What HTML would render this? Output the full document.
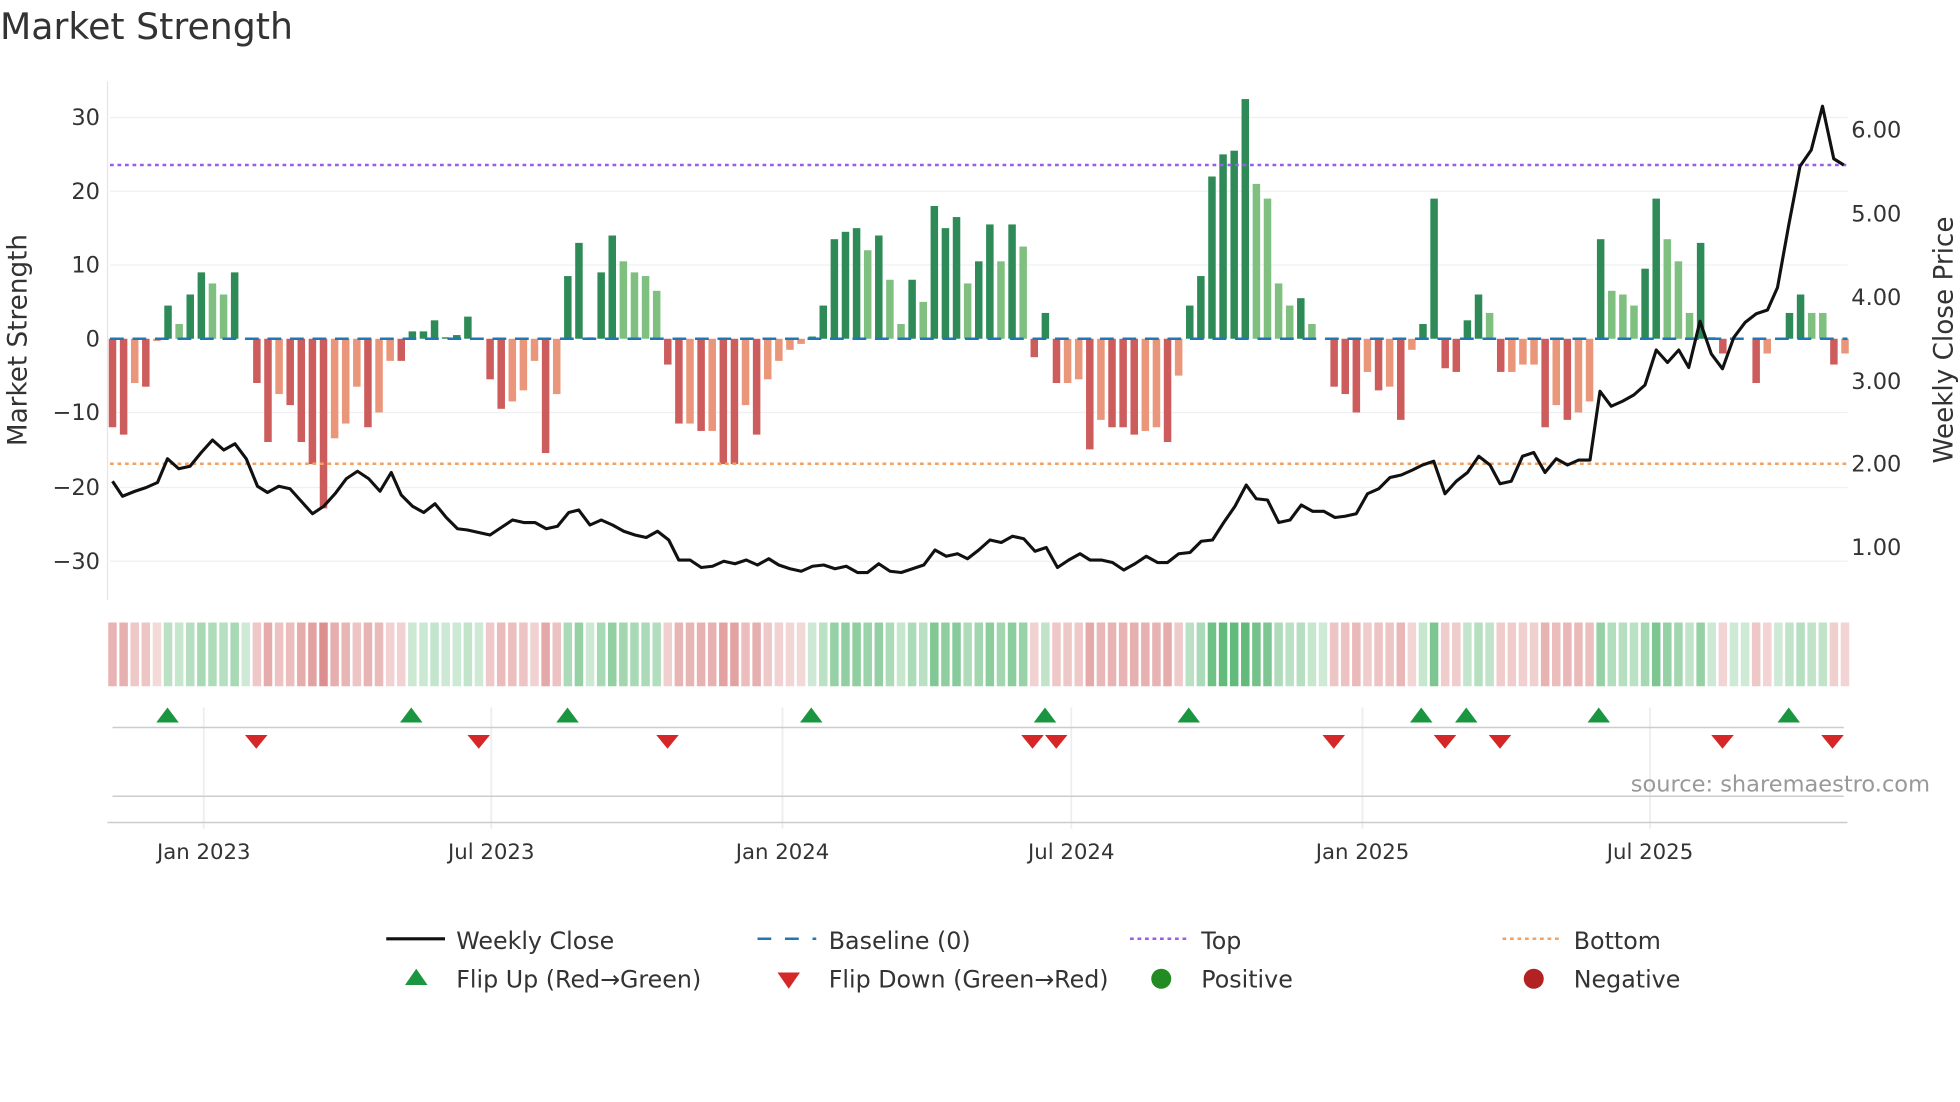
<!DOCTYPE html>
<html><head><meta charset="utf-8"><style>
html,body{margin:0;padding:0;background:#fff;width:1960px;height:1102px;overflow:hidden}
svg{display:block}
text{font-family:"DejaVu Sans","Liberation Sans",sans-serif;fill:#333}
</style></head><body>
<svg id="s" width="1960" height="1102" viewBox="0 0 1568 881.6" xmlns="http://www.w3.org/2000/svg">
<text x="0" y="31" font-size="29">Market Strength</text>
<g id="grid"></g>
<line x1="86" y1="65" x2="86" y2="480" stroke="#e6e6e6" stroke-width="1"/>
<g id="bars"></g>
<line x1="88" y1="271" x2="1478" y2="271" stroke="#1f77b4" stroke-width="2" stroke-dasharray="11,7"/>
<line x1="88" y1="132" x2="1478" y2="132" stroke="#9b5de5" stroke-width="2" stroke-dasharray="3,3"/>
<line x1="88" y1="371" x2="1478" y2="371" stroke="#f4a261" stroke-width="2" stroke-dasharray="3,3"/>
<polyline id="price" fill="none" stroke="#111" stroke-width="2.5" stroke-linejoin="round"/>
<g id="heat"></g>
<g id="lower"></g>
<g font-size="18" text-anchor="end">
<text x="80" y="100">30</text><text x="80" y="159">20</text><text x="80" y="218">10</text><text x="80" y="277">0</text>
<text x="80" y="336">−10</text><text x="80" y="396">−20</text><text x="80" y="455">−30</text>
</g>
<g font-size="18">
<text x="1481" y="110">6.00</text><text x="1481" y="177">5.00</text><text x="1481" y="244">4.00</text>
<text x="1481" y="311">3.00</text><text x="1481" y="377">2.00</text><text x="1481" y="444">1.00</text>
</g>
<text font-size="21" transform="translate(21,272) rotate(-90)" text-anchor="middle">Market Strength</text>
<text font-size="21" transform="translate(1562,272) rotate(-90)" text-anchor="middle">Weekly Close Price</text>
<text x="1544" y="633" font-size="18" text-anchor="end" style="fill:#999">source: sharemaestro.com</text>
<g font-size="17" text-anchor="middle">
<text x="163" y="687">Jan 2023</text><text x="393" y="687">Jul 2023</text><text x="626" y="687">Jan 2024</text>
<text x="857" y="687">Jul 2024</text><text x="1090" y="687">Jan 2025</text><text x="1320" y="687">Jul 2025</text>
</g>
<g font-size="19">
<line x1="309" y1="751" x2="356" y2="751" stroke="#111" stroke-width="2.5"/><text x="365" y="759">Weekly Close</text>
<line x1="606" y1="751" x2="653" y2="751" stroke="#1f77b4" stroke-width="2" stroke-dasharray="11,11"/><text x="663" y="759">Baseline (0)</text>
<line x1="904" y1="751" x2="951" y2="751" stroke="#9b5de5" stroke-width="2" stroke-dasharray="3,3"/><text x="961" y="759">Top</text>
<line x1="1202" y1="751" x2="1249" y2="751" stroke="#f4a261" stroke-width="2" stroke-dasharray="3,3"/><text x="1259" y="759">Bottom</text>
<polygon points="333,775 324,788 342,788" fill="#1a9641"/><text x="365" y="790">Flip Up (Red→Green)</text>
<polygon points="622,778 640,778 631,791" fill="#d62728"/><text x="663" y="790">Flip Down (Green→Red)</text>
<circle cx="929" cy="783" r="8" fill="#228b22"/><text x="961" y="790">Positive</text>
<circle cx="1227" cy="783" r="8" fill="#b22222"/><text x="1259" y="790">Negative</text>
</g>
</svg>
<script>
var NS="http://www.w3.org/2000/svg";
function el(p,t,a){var e=document.createElementNS(NS,t);for(var k in a)e.setAttribute(k,a[k]);document.getElementById(p).appendChild(e);return e;}
[94,153,212,330,390,449].forEach(function(y){el("grid","line",{x1:88,x2:1478,y1:y,y2:y,stroke:"#eef0f3","stroke-width":1});});
var d=[[-12,1],[-13,1],[-6,0],[-6.5,1],[-0.3,0],[4.5,1],[2,0],[6,1],[9,1],[7.5,0],[6,0],[9,1],[0,1],[-6,1],[-14,1],[-7.5,0],[-9,1],[-14,1],[-17,1],[-23,1],[-13.5,0],[-11.5,0],[-6.5,0],[-12,1],[-10,0],[-3,0],[-3,1],[1,1],[1,1],[2.5,1],[0.2,1],[0.5,1],[3,1],[0,1],[-5.5,1],[-9.5,1],[-8.5,0],[-7,0],[-3,0],[-15.5,1],[-7.5,0],[8.5,1],[13,1],[0.2,0],[9,1],[14,1],[10.5,0],[9,0],[8.5,0],[6.5,0],[-3.5,1],[-11.5,1],[-11.5,0],[-12.5,1],[-12.5,0],[-17,1],[-17,1],[-9,0],[-13,1],[-5.5,0],[-3,0],[-1.5,0],[-0.7,0],[0.3,1],[4.5,1],[13.5,1],[14.5,1],[15,1],[12,0],[14,1],[8,0],[2,0],[8,1],[5,0],[18,1],[15,1],[16.5,1],[7.5,0],[10.5,1],[15.5,1],[10.5,0],[15.5,1],[12.5,0],[-2.5,1],[3.5,1],[-6,1],[-6,0],[-5.5,0],[-15,1],[-11,0],[-12,1],[-12,1],[-13,1],[-12.5,0],[-12,0],[-14,1],[-5,0],[4.5,1],[8.5,1],[22,1],[25,1],[25.5,1],[32.5,1],[21,0],[19,0],[7.5,0],[4.5,0],[5.5,1],[2,0],[0,0],[-6.5,1],[-7.5,1],[-10,1],[-4.5,0],[-7,1],[-6.5,0],[-11,1],[-1.5,0],[2,1],[19,1],[-4,1],[-4.5,1],[2.5,1],[6,1],[3.5,0],[-4.5,1],[-4.5,0],[-3.5,0],[-3.5,0],[-12,1],[-9,0],[-11,1],[-10,0],[-8.5,0],[13.5,1],[6.5,0],[6,0],[4.5,0],[9.5,1],[19,1],[13.5,0],[10.5,0],[3.5,0],[13,1],[0.2,1],[-2,1],[0,1],[0,1],[-6,1],[-2,0],[0,1],[3.5,1],[6,1],[3.5,0],[3.5,0],[-3.5,1],[-2,0]];
var sp=(1476-90)/(d.length-1);
d.forEach(function(v,i){var x=90+i*sp,val=v[0],dk=v[1];var h=Math.abs(val)*5.9;
 var c=val>=0?(dk?"#2e8b57":"#7fbf7f"):(dk?"#cd5c5c":"#e9967a");
 if(h>0.3)el("bars","rect",{x:x-3,width:6,y:val>=0?271-h:271,height:h,fill:c});
 var a=Math.min(1,Math.abs(val)/25);
 var hc=val>=0?"rgba(60,170,90,"+(0.25+a*0.55)+")":"rgba(205,90,90,"+(0.22+a*0.5)+")";
 el("heat","rect",{x:x-3.4,width:6.8,y:498,height:51,fill:hc});
});
var p="90,385 98,397 108,393 117,390 126,386 134,367 143,375 152,373 161,362 170,352 179,360 188,355 197,367 206,389 214,394 223,389 232,391 241,401 250,411 259,405 268,395 277,383 286,377 295,383 304,393 313,378 321,396 330,405 339,410 348,403 357,414 366,423 374,424 383,426 392,428 401,422 410,416 419,418 428,418 437,423 446,421 455,410 463,408 472,420 481,416 490,420 499,425 508,428 517,430 526,425 535,432 543,448 552,448 561,454 570,453 579,449 588,451 597,448 606,452 615,447 623,452 632,455 641,457 650,453 659,452 668,455 677,453 686,458 694,458 703,451 712,457 721,458 730,455 739,452 748,440 757,445 766,443 774,447 783,440 792,432 801,434 810,429 819,431 828,441 837,438 846,454 855,448 864,443 872,448 881,448 890,450 899,456 908,451 917,445 926,450 934,450 943,443 952,442 961,433 970,432 979,418 988,405 997,388 1005,399 1014,400 1023,418 1032,416 1041,404 1050,409 1059,409 1068,414 1076,413 1085,411 1094,395 1103,391 1112,382 1121,380 1130,376 1138,372 1147,369 1156,395 1165,385 1174,378 1183,365 1192,372 1200,387 1209,385 1218,365 1227,362 1236,378 1245,367 1254,372 1263,368 1272,368 1280,313 1289,325 1298,321 1307,316 1316,308 1325,280 1334,290 1343,280 1351,294 1360,257 1369,283 1378,295 1387,270 1396,258 1405,251 1414,248 1422,230 1431,180 1440,133 1449,120 1458,85 1467,127 1475,132";
document.getElementById("price").setAttribute("points",p);
[163,393,626,857,1090,1320].forEach(function(x){el("lower","line",{x1:x,x2:x,y1:566,y2:663,stroke:"#eceef1","stroke-width":1.5});});
el("lower","line",{x1:90,x2:1475,y1:582,y2:582,stroke:"#ccc","stroke-width":1.2});
el("lower","line",{x1:90,x2:1475,y1:637,y2:637,stroke:"#ccc","stroke-width":1.2});
el("lower","line",{x1:86,x2:1478,y1:658,y2:658,stroke:"#ccc","stroke-width":1.2});
[134,329,454,649,836,951,1137,1173,1279,1431].forEach(function(x){el("lower","polygon",{points:(x)+",566 "+(x-9)+",578 "+(x+9)+",578",fill:"#1a9641"});});
[205,383,534,826,845,1067,1156,1200,1378,1466].forEach(function(x){el("lower","polygon",{points:(x-9)+",588 "+(x+9)+",588 "+x+",599",fill:"#d62728"});});
</script>
</body></html>
